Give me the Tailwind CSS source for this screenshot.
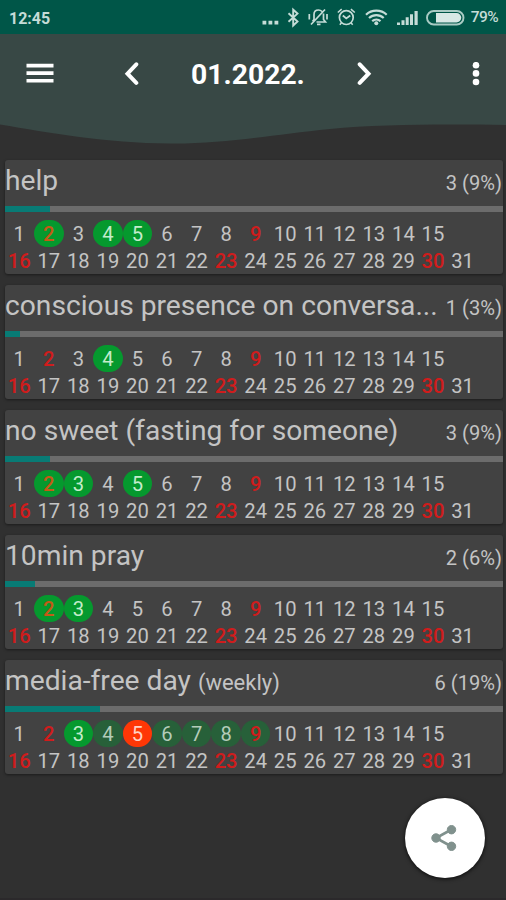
<!DOCTYPE html>
<html lang="en">
<head>
    <meta charset="UTF-8" />
    <meta name="viewport" content="width=device-width, initial-scale=1.0" />
    <title>Habits - 01.2022.</title>
    <script src="https://cdn.jsdelivr.net/npm/@tailwindcss/browser@4"></script>
</head>
<body class="relative h-[900px] w-[506px] overflow-hidden bg-[#303030] font-['Roboto',sans-serif] text-[#c4c4c4]">

<!-- Status bar -->
<div class="flex h-[34px] items-center justify-between bg-[#005648] pt-0.5 pr-2 pl-[9px] text-[#c5dcd7]">
    <span class="pt-px text-[16px] leading-none font-bold">12:45</span>
    <svg class="-mt-0.5 -mr-2 ml-auto h-[34px] w-[246px]" viewBox="260 0 246 34" fill="none" stroke="currentColor" stroke-width="1.5">
        <!-- more -->
        <path d="M262.500 20.800h3.800v3.800h-3.800zM268.500 20.800h3.800v3.800h-3.800zM274.500 20.800h3.800v3.800h-3.800z" fill="currentColor" stroke="none" />
        <!-- bluetooth -->
        <path d="M288.500 13.300l9 8.200-4.300 4V9.700l4.300 3.900-9 8.100" stroke-width="1.900" />
        <!-- muted bell -->
        <path d="M312.500 21.500l1.500-2v-5c0-3 2-4.500 4.500-4.500 1.500 0 2.500.5 3.500 1.500M323.500 13.500v6l2 2.500h-9M311 24.500L325 9.500M317 24.300h3.500M309.300 14v5.500M327 14v5.500" stroke-width="1.700" />
        <!-- alarm -->
        <circle cx="346.300" cy="17.600" r="6.900" stroke-width="1.700" />
        <path d="M342.800 15.500l3.500 2.900 3.900-2.900" stroke-width="1.900" />
        <path d="M337.800 12.500l3.900-3.400M350.900 9.100l3.900 3.400M341.500 22.700l-1.700 2M351 22.700l1.700 2" />
        <!-- wifi -->
        <path d="M366 14.700c5.700-5.400 15-5.400 20.700 0M369 18c4.200-3.900 10.500-3.900 14.700 0M372.200 21.200c2.400-2.100 5.900-2.100 8.300 0" stroke-width="2.200" />
        <circle cx="376.300" cy="23.300" r="2" fill="currentColor" stroke="none" />
        <!-- signal -->
        <path d="M397 22.500h3v2.500h-3zM401.500 20.200h3V25h-3zM405.700 17.200h3V25h-3zM410 14.200h3V25h-3zM414.500 11h3.200v14h-3.200z" fill="currentColor" stroke="none" />
        <!-- battery -->
        <rect x="427" y="11" width="36.500" height="13.500" rx="6.750" stroke="#a9cbc4" stroke-width="1.900" />
        <path d="M436 13h20.500a4.750 4.750 0 0 1 0 9.500H436z" fill="#d8e8e5" stroke="none" />
    </svg>
    <span class="absolute top-[10px] right-2 text-[15.500px] leading-none font-medium tracking-[-0.6px]">79%</span>
</div>

<!-- Header -->
<header class="relative h-[126px] text-white">
    <svg class="absolute inset-0 h-[126px] w-[506px]" viewBox="0 34 506 126">
        <path d="M0 34H506V125C450 124 380 124 330 129C270 135 225 144 170 143.500C105 143 50 133 0 124.500Z" fill="#384845" />
    </svg>
    <div class="relative grid h-20 grid-cols-[80px_105px_124px_110px_87px] items-center">
        <button class="pl-[26px]" aria-label="Menu">
            <svg class="h-6 w-[28px]" viewBox="0 0 28 24" stroke="#fff" stroke-width="3.600"><path d="M.5 3.600h27M.5 11.100h27M.5 18.700h27" /></svg>
        </button>
        <button class="pl-[43px]" aria-label="Previous month">
            <svg class="h-6 w-[18px]" viewBox="0 0 18 24" fill="none" stroke="#fff" stroke-width="4" stroke-linecap="round"><path d="M13.300 2.300L4.500 11.700l8.800 9.200" /></svg>
        </button>
        <h1 class="pt-[3px] pl-1.5 text-[28.300px] leading-none font-bold whitespace-nowrap">01.2022.</h1>
        <button class="pl-[46px]" aria-label="Next month">
            <svg class="h-6 w-[18px]" viewBox="0 0 18 24" fill="none" stroke="#fff" stroke-width="4" stroke-linecap="round"><path d="M4.700 2.300L13.500 11.700l-8.800 9.200" /></svg>
        </button>
        <button class="pl-[52px]" aria-label="More options">
            <svg class="h-6 w-[10px]" viewBox="0 0 10 24" fill="#fff"><circle cx="5" cy="3.200" r="3.300" /><circle cx="5" cy="11.400" r="3.300" /><circle cx="5" cy="20" r="3.300" /></svg>
        </button>
    </div>
</header>

<!-- Habits -->
<main id="habits" class="flex flex-col gap-[11.3px] pr-[3px] pl-[4.5px]"></main>

<button class="absolute top-[798px] left-[405px] flex size-[80px] items-center justify-center rounded-full bg-white shadow-[0_1px_4px_rgba(0,0,0,0.8)]" aria-label="Share">
    <svg class="mr-[3px] h-[28px] w-[26px]" viewBox="0 0 26 28" fill="#80918d" stroke="#80918d">
        <path d="M20.500 5.500L5 14l15.500 8.500" fill="none" stroke-width="2.600" />
        <circle cx="20.500" cy="5.700" r="4.200" /><circle cx="5" cy="14" r="4.200" /><circle cx="20.500" cy="22.300" r="4.200" />
    </svg>
</button>

<div class="absolute inset-x-0 bottom-0 h-0.5 bg-[#2b292b]"></div>

<script>
    const habits = [
        { name: "help", count: "3 (9%)", bar: 45.5, done: [2, 4, 5] },
        { name: "conscious presence on conversa...", count: "1 (3%)", bar: 15.5, done: [4] },
        { name: "no sweet (fasting for someone)", count: "3 (9%)", bar: 45.5, done: [2, 3, 5] },
        { name: "10min pray", count: "2 (6%)", bar: 30, done: [2, 3] },
        { name: "media-free day", note: "(weekly)", count: "6 (19%)", bar: 95, done: [3], failed: [5], covered: [4, 6, 7, 8, 9] }
    ];
    const sundays = [2, 9, 16, 23, 30];

    function dayCell(habit, day) {
        let mark = "";
        let color = "text-[#c4c4c4]";
        if (habit.done.includes(day)) {
            mark = "bg-[#05992e]";
            color = "text-[#c3eccb]";
        } else if ((habit.failed || []).includes(day)) {
            mark = "bg-[#ff3706]";
            color = "text-[#ffd2c5]";
        } else if ((habit.covered || []).includes(day)) {
            mark = "bg-[#276039]";
            color = "text-[#b4ccba]";
        }
        if (sundays.includes(day)) {
            color = mark === "bg-[#05992e]" ? "text-[#c45a16] font-medium" : "text-[#d01c1c] font-medium";
        }
        return `<span class="flex h-[27px] items-center justify-center rounded-full pt-px ${mark} ${color}">${day}</span>`;
    }

    document.getElementById("habits").innerHTML = habits.map(h => {
        const days = Array.from({ length: 31 }, (_, i) => dayCell(h, i + 1));
        return `
        <section class="h-[113.8px] rounded-[3px] bg-[#424242] shadow-[0_1px_3px_rgba(0,0,0,0.45)]">
            <div class="flex h-[46px] items-baseline justify-between pt-[5px] pr-px pl-[0.5px] leading-8 whitespace-nowrap">
                <h2 class="text-[28.200px]">${h.name}${h.note ? ` <small class="text-[22px]">${h.note}</small>` : ""}</h2>
                <span class="text-[20.100px]">${h.count}</span>
            </div>
            <div class="h-[6px] bg-[#6c6c6c]"><div class="h-full bg-[#087b75]" style="width: ${h.bar}px"></div></div>
            <div class="grid grid-cols-[repeat(15,29.55px)] pt-2 text-[20.200px] leading-none">${days.slice(0, 15).join("")}</div>
            <div class="grid grid-cols-[repeat(16,29.55px)] text-[20.200px] leading-none">${days.slice(15).join("")}</div>
        </section>`;
    }).join("");
</script>
</body>
</html>
